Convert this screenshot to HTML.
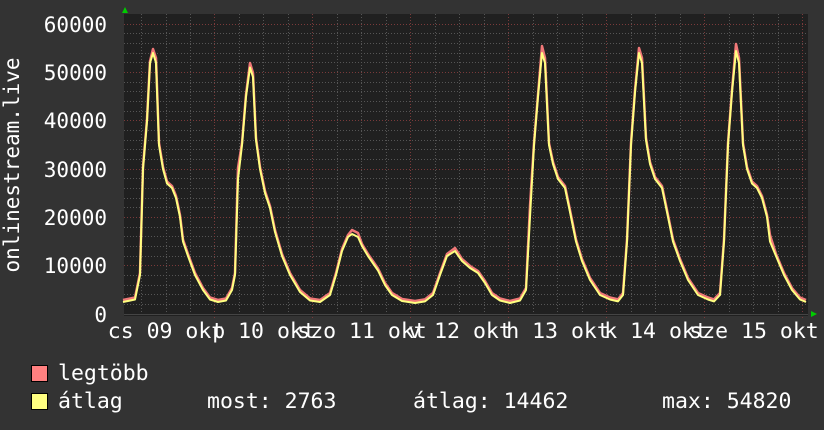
<!DOCTYPE html>
<html><head><meta charset="utf-8"><style>
body{margin:0;background:#333;}
svg{display:block}
text{font-family:"DejaVu Sans Mono","Liberation Mono",monospace;fill:#fff;}
</style></head><body>
<svg width="824" height="430" viewBox="0 0 824 430" xmlns="http://www.w3.org/2000/svg">
<rect width="824" height="430" fill="#333"/>
<rect x="124" y="14" width="684" height="302" fill="#202020"/>
<g stroke="#555" stroke-width="1" stroke-dasharray="1,2">
<path d="M124 304.5H808M124 294.5H808M124 285.5H808M124 275.5H808M124 256.5H808M124 246.5H808M124 236.5H808M124 227.5H808M124 207.5H808M124 198.5H808M124 188.5H808M124 178.5H808M124 159.5H808M124 149.5H808M124 140.5H808M124 130.5H808M124 111.5H808M124 101.5H808M124 91.5H808M124 82.5H808M124 62.5H808M124 53.5H808M124 43.5H808M124 33.5H808"/>
<path d="M141.5 14V316M166.5 14V316M190.5 14V316M239.5 14V316M263.5 14V316M288.5 14V316M337.5 14V316M361.5 14V316M386.5 14V316M435.5 14V316M459.5 14V316M484.5 14V316M533.5 14V316M557.5 14V316M582.5 14V316M631.5 14V316M655.5 14V316M680.5 14V316M729.5 14V316M753.5 14V316M778.5 14V316"/>
</g>
<g stroke="#7a3a3a" stroke-width="1" stroke-dasharray="1,2">
<path d="M124 265.5H808M124 217.5H808M124 169.5H808M124 120.5H808M124 72.5H808M124 24.5H808"/>
<path d="M214.5 14V320M312.5 14V320M410.5 14V320M508.5 14V320M606.5 14V320M704.5 14V320M802.5 14V320"/>
</g>
<line x1="124" y1="314.5" x2="808" y2="314.5" stroke="#444"/>
<polygon points="122,13 128,13 125,7" fill="#0c0"/>
<polygon points="811,311 811,317 817,314" fill="#0c0"/>
<g fill="none" stroke-linejoin="round">
<polyline stroke="#f07878" stroke-width="2.5" transform="translate(0,-2)" points="123,302 135,299.5 140,275 143,169 147,121 150,63 153,51 156,60 159,145 163,169 167,183.5 172,188 176,198 180,217 183,241.5 188,256 195,275 203,290 210,299.5 218,302 226,300.5 232,290 235,275 238,170 242,145 246,96.5 250,65 253,75 256,140 260,169 265,193 270,208 275,232 282,256 290,275 300,292 310,300.5 320,302 330,295 336,275 342,251 348,237 352,232 358,235 362,246 368,256 378,270.5 385,285 392,295 402,301 415,303 425,301.4 433,295 440,275 447,256 455,250 462,261 470,268 478,273 485,283 492,295 500,300.5 510,303 520,300.5 526,290 530,208 534,145 538,96.5 542,48 545,60 549,145 553,164 558,179 565,188 570,212 576,241.5 582,261 590,280 600,295 610,299.5 618,301.4 623,295 627,241.5 631,145 635,92 639,50 642,60 646,140 650,164 655,179 662,188 667,212 673,241.5 680,261 688,280 698,295 708,299.5 714,301.4 720,295 724,241.5 728,145 732,92 736,46 739,60 743,145 747,169 752,183.5 757,188 762,198 767,217 770,237 776,256 784,275 792,290 800,299.5 806,302"/>
<polyline stroke="#ffff80" stroke-width="2" points="123,302 135,299.5 140,275 143,169 147,121 150,63 153,53 156,62.7 159,145 163,169 167,183.5 172,188 176,198 180,217 183,241.5 188,256 195,275 203,290 210,299.5 218,302 226,300.5 232,290 235,275 238,179 242,145 246,96.5 250,67.5 253,77 256,140 260,169 265,193 270,208 275,232 282,256 290,275 300,292 310,300.5 320,302 330,295 336,275 342,251 348,237 352,234 358,237 362,246 368,256 378,270.5 385,285 392,295 402,301 415,303 425,301.4 433,295 440,275 447,256 455,251 462,261 470,268 478,273 485,283 492,295 500,300.5 510,303 520,300.5 526,290 530,217 534,145 538,96.5 542,53 545,63 549,145 553,164 558,179 565,188 570,212 576,241.5 582,261 590,280 600,295 610,299.5 618,301.4 623,295 627,241.5 631,145 635,92 639,53 642,63 646,140 650,164 655,179 662,188 667,212 673,241.5 680,261 688,280 698,295 708,299.5 714,301.4 720,295 724,241.5 728,145 732,92 736,51 739,63 743,145 747,169 752,183.5 757,188 762,198 767,217 770,241.5 776,256 784,275 792,290 800,299.5 806,302"/>
</g>
<g font-size="21" text-anchor="end">
<text x="107" y="32">60000</text>
<text x="107" y="80">50000</text>
<text x="107" y="128">40000</text>
<text x="107" y="177">30000</text>
<text x="107" y="225">20000</text>
<text x="107" y="273">10000</text>
<text x="107" y="322">0</text>
</g>
<text font-size="21" transform="translate(19,165) rotate(-90)" text-anchor="middle">onlinestream.live</text>
<g font-size="21.5" text-anchor="middle">
<text x="166" y="338">cs 09 okt</text>
<text x="264" y="338">p 10 okt</text>
<text x="362" y="338">szo 11 okt</text>
<text x="460" y="338">v 12 okt</text>
<text x="558" y="338">h 13 okt</text>
<text x="656" y="338">k 14 okt</text>
<text x="754" y="338">sze 15 okt</text>
</g>
<rect x="31.5" y="365.5" width="16" height="16" fill="#ff8080" stroke="#000"/>
<rect x="31.5" y="393.5" width="16" height="16" fill="#ffff80" stroke="#000"/>
<g font-size="21.5">
<text x="58" y="380">legtöbb</text>
<text x="58" y="408">átlag</text>
<text x="207" y="408">most: 2763</text>
<text x="413" y="408">átlag: 14462</text>
<text x="662" y="408">max: 54820</text>
</g>
</svg>
</body></html>
